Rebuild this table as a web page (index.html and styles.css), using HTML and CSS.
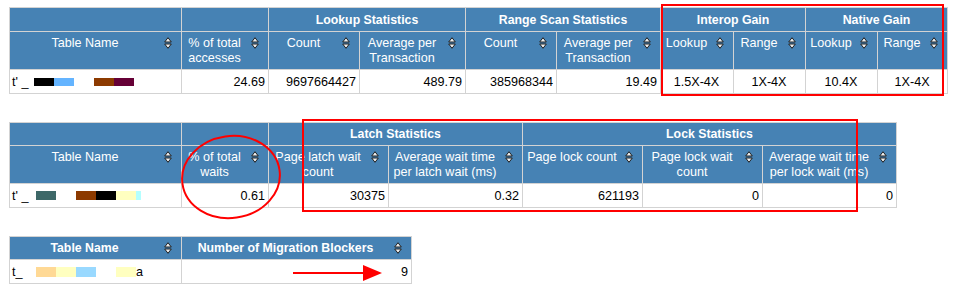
FILE: index.html
```html
<!DOCTYPE html>
<html>
<head>
<meta charset="utf-8">
<link rel="stylesheet" href="styles.css">
</head>
<body>
<div class="page">
  <table class="grid t1">
    <colgroup>
      <col style="width:172px"><col style="width:87px"><col style="width:91px"><col style="width:106px"><col style="width:91px"><col style="width:104px"><col style="width:73px"><col style="width:72px"><col style="width:72px"><col style="width:70px">
    </colgroup>
    <thead>
      <tr class="group">
        <th></th><th></th>
        <th colspan="2">Lookup Statistics</th>
        <th colspan="2">Range Scan Statistics</th>
        <th colspan="2">Interop Gain</th>
        <th colspan="2">Native Gain</th>
      </tr>
      <tr class="cols">
        <th>Table Name<span class="sort"><svg viewBox="0 0 8 12" width="8" height="12"><polygon points="4,0.7 7.3,5 0.7,5"/><polygon points="0.7,7 7.3,7 4,11.3"/></svg></span></th>
        <th>% of total accesses<span class="sort"><svg viewBox="0 0 8 12" width="8" height="12"><polygon points="4,0.7 7.3,5 0.7,5"/><polygon points="0.7,7 7.3,7 4,11.3"/></svg></span></th>
        <th>Count<span class="sort"><svg viewBox="0 0 8 12" width="8" height="12"><polygon points="4,0.7 7.3,5 0.7,5"/><polygon points="0.7,7 7.3,7 4,11.3"/></svg></span></th>
        <th>Average per Transaction<span class="sort"><svg viewBox="0 0 8 12" width="8" height="12"><polygon points="4,0.7 7.3,5 0.7,5"/><polygon points="0.7,7 7.3,7 4,11.3"/></svg></span></th>
        <th>Count<span class="sort"><svg viewBox="0 0 8 12" width="8" height="12"><polygon points="4,0.7 7.3,5 0.7,5"/><polygon points="0.7,7 7.3,7 4,11.3"/></svg></span></th>
        <th>Average per Transaction<span class="sort"><svg viewBox="0 0 8 12" width="8" height="12"><polygon points="4,0.7 7.3,5 0.7,5"/><polygon points="0.7,7 7.3,7 4,11.3"/></svg></span></th>
        <th>Lookup<span class="sort"><svg viewBox="0 0 8 12" width="8" height="12"><polygon points="4,0.7 7.3,5 0.7,5"/><polygon points="0.7,7 7.3,7 4,11.3"/></svg></span></th>
        <th>Range<span class="sort"><svg viewBox="0 0 8 12" width="8" height="12"><polygon points="4,0.7 7.3,5 0.7,5"/><polygon points="0.7,7 7.3,7 4,11.3"/></svg></span></th>
        <th>Lookup<span class="sort"><svg viewBox="0 0 8 12" width="8" height="12"><polygon points="4,0.7 7.3,5 0.7,5"/><polygon points="0.7,7 7.3,7 4,11.3"/></svg></span></th>
        <th>Range<span class="sort"><svg viewBox="0 0 8 12" width="8" height="12"><polygon points="4,0.7 7.3,5 0.7,5"/><polygon points="0.7,7 7.3,7 4,11.3"/></svg></span></th>
      </tr>
    </thead>
    <tbody>
      <tr class="data">
        <td class="name"><span class="pre">t' _</span><span class="blk k1"></span><span class="blk k2"></span><span class="gap"></span><span class="blk k3"></span><span class="blk k4"></span></td>
        <td class="num">24.69</td>
        <td class="num">9697664427</td>
        <td class="num">489.79</td>
        <td class="num">385968344</td>
        <td class="num">19.49</td>
        <td class="ctr">1.5X-4X</td>
        <td class="ctr">1X-4X</td>
        <td class="ctr">10.4X</td>
        <td class="ctr">1X-4X</td>
      </tr>
    </tbody>
  </table>

  <table class="grid t2">
    <colgroup>
      <col style="width:172px"><col style="width:87px"><col style="width:120px"><col style="width:134px"><col style="width:120px"><col style="width:120px"><col style="width:134px">
    </colgroup>
    <thead>
      <tr class="group">
        <th></th><th></th>
        <th colspan="2">Latch Statistics</th>
        <th colspan="3">Lock Statistics</th>
      </tr>
      <tr class="cols">
        <th>Table Name<span class="sort"><svg viewBox="0 0 8 12" width="8" height="12"><polygon points="4,0.7 7.3,5 0.7,5"/><polygon points="0.7,7 7.3,7 4,11.3"/></svg></span></th>
        <th>% of total waits<span class="sort"><svg viewBox="0 0 8 12" width="8" height="12"><polygon points="4,0.7 7.3,5 0.7,5"/><polygon points="0.7,7 7.3,7 4,11.3"/></svg></span></th>
        <th>Page latch wait count<span class="sort"><svg viewBox="0 0 8 12" width="8" height="12"><polygon points="4,0.7 7.3,5 0.7,5"/><polygon points="0.7,7 7.3,7 4,11.3"/></svg></span></th>
        <th>Average wait time per latch wait (ms)<span class="sort"><svg viewBox="0 0 8 12" width="8" height="12"><polygon points="4,0.7 7.3,5 0.7,5"/><polygon points="0.7,7 7.3,7 4,11.3"/></svg></span></th>
        <th>Page lock count<span class="sort"><svg viewBox="0 0 8 12" width="8" height="12"><polygon points="4,0.7 7.3,5 0.7,5"/><polygon points="0.7,7 7.3,7 4,11.3"/></svg></span></th>
        <th>Page lock wait count<span class="sort"><svg viewBox="0 0 8 12" width="8" height="12"><polygon points="4,0.7 7.3,5 0.7,5"/><polygon points="0.7,7 7.3,7 4,11.3"/></svg></span></th>
        <th>Average wait time per lock wait (ms)<span class="sort"><svg viewBox="0 0 8 12" width="8" height="12"><polygon points="4,0.7 7.3,5 0.7,5"/><polygon points="0.7,7 7.3,7 4,11.3"/></svg></span></th>
      </tr>
    </thead>
    <tbody>
      <tr class="data">
        <td class="name"><span class="pre">t' _</span><span class="blk b1 w35"></span><span class="gap"></span><span class="blk b2"></span><span class="blk b3"></span><span class="blk b4"></span><span class="blk b5"></span></td>
        <td class="num">0.61</td>
        <td class="num">30375</td>
        <td class="num">0.32</td>
        <td class="num">621193</td>
        <td class="num">0</td>
        <td class="num">0</td>
      </tr>
    </tbody>
  </table>

  <table class="grid t3">
    <colgroup>
      <col style="width:172px"><col style="width:230px">
    </colgroup>
    <thead>
      <tr class="single">
        <th>Table Name<span class="sort"><svg viewBox="0 0 8 12" width="8" height="12"><polygon points="4,0.7 7.3,5 0.7,5"/><polygon points="0.7,7 7.3,7 4,11.3"/></svg></span></th>
        <th>Number of Migration Blockers<span class="sort"><svg viewBox="0 0 8 12" width="8" height="12"><polygon points="4,0.7 7.3,5 0.7,5"/><polygon points="0.7,7 7.3,7 4,11.3"/></svg></span></th>
      </tr>
    </thead>
    <tbody>
      <tr class="data">
        <td class="name"><span class="pre">t_</span><span class="blk c1"></span><span class="blk c2"></span><span class="blk c3"></span><span class="gap"></span><span class="blk c2"></span><span class="tail">a</span></td>
        <td class="num">9</td>
      </tr>
    </tbody>
  </table>

  <svg class="marks" width="954" height="287" viewBox="0 0 954 287">
    <rect x="662" y="5" width="281" height="90" />
    <rect x="303" y="120" width="554" height="91" />
    <ellipse cx="231" cy="177" rx="49" ry="41" transform="rotate(-8 231 177)" />
    <line x1="293" y1="273" x2="366" y2="273" />
    <polygon class="head" points="363,265 382,273 363,281" />
  </svg>
</div>
</body>
</html>
```
FILE: styles.css
```css
html, body {
  margin: 0;
  padding: 0;
  background: #ffffff;
}

body {
  font-family: "Liberation Sans", Arial, sans-serif;
  font-size: 12.6px;
  color: #000000;
}

.page {
  position: relative;
  width: 954px;
  height: 287px;
  overflow: hidden;
  padding-top: 7px;
  box-sizing: border-box;
}

.grid {
  border-collapse: collapse;
  table-layout: fixed;
  margin-left: 9px;
}

.t1 { width: 939px; }
.t2 { width: 888px; margin-top: 28px; }
.t3 { width: 403px; margin-top: 28px; }

.grid th,
.grid td {
  border: 1px solid #d3d3d3;
  overflow: hidden;
  white-space: normal;
}

.grid th {
  background: #4682b4;
  color: #ffffff;
  position: relative;
}

.group th {
  height: 23px;
  padding: 0;
  font-weight: bold;
  font-size: 12.3px;
  text-align: center;
  vertical-align: middle;
}

.t2 .group th {
  height: 22px;
}

.cols th {
  height: 33px;
  padding: 4px 23px 0 2px;
  font-weight: normal;
  text-align: center;
  vertical-align: top;
  line-height: 15px;
}

.single th {
  height: 22px;
  padding: 0 24px 0 2px;
  font-weight: bold;
  font-size: 12.3px;
  text-align: center;
  vertical-align: middle;
}

.sort {
  position: absolute;
  right: 9px;
  top: 5px;
  width: 8px;
  height: 12px;
  display: block;
}

.single .sort {
  top: 5px;
}

.sort svg {
  display: block;
}

.sort polygon {
  fill: #f0f0f0;
  stroke: #1e1e1e;
  stroke-width: 1;
  stroke-linejoin: round;
}

.data td {
  height: 23px;
  padding: 0 3px 0 2px;
  vertical-align: middle;
  white-space: nowrap;
}

.num { text-align: right; }
.ctr { text-align: center; }
.name { text-align: left; }

.pre {
  display: inline-block;
  width: 22px;
  vertical-align: middle;
}

.blk {
  display: inline-block;
  width: 20px;
  height: 8px;
  vertical-align: middle;
}

.gap {
  display: inline-block;
  width: 20px;
  height: 8px;
  vertical-align: middle;
}

.k1 { background: #000000; }
.k2 { background: #64b4ff; }
.k3 { background: #8c3a00; }
.k4 { background: #660036; }

.t2 .blk, .t2 .gap { height: 9px; }
.t2 .pre { width: 24px; }
.b1 { background: #3e6868; }
.b2 { background: #8c3a00; }
.b3 { background: #000000; }
.b4 { background: #ffffc0; }
.b5 { background: #b4ffff; width: 5px; }

.t3 .blk, .t3 .gap { height: 10px; }
.t3 .pre { width: 24px; }
.c1 { background: #ffd995; }
.c2 { background: #ffffc0; }
.c3 { background: #99d9ff; }
.tail { display: inline-block; vertical-align: middle; }

.marks {
  position: absolute;
  left: 0;
  top: 0;
  pointer-events: none;
}

.marks rect,
.marks ellipse {
  fill: none;
  stroke: #ff0000;
  stroke-width: 2;
}

.marks line {
  stroke: #ff0000;
  stroke-width: 2;
}

.marks .head {
  fill: #ff0000;
  stroke: none;
}
```
